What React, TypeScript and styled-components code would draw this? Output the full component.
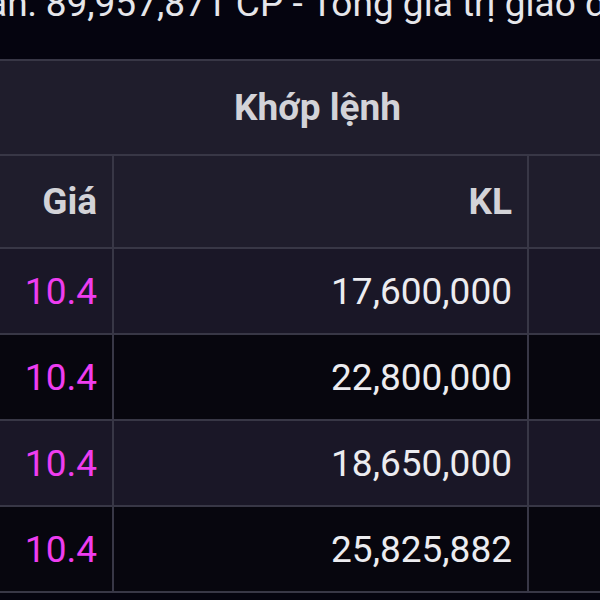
import { createGlobalStyle } from "styled-components";
import styled from "styled-components";

const GlobalStyle = createGlobalStyle`
  html, body {
    margin: 0;
    padding: 0;
    background: #05040f;
  }
  body {
    font-family: Roboto, "Noto Sans", "Liberation Sans", sans-serif;
    overflow: hidden;
  }
`;

const trades = [
  { price: "10.4", volume: "17,600,000" },
  { price: "10.4", volume: "22,800,000" },
  { price: "10.4", volume: "18,650,000" },
  { price: "10.4", volume: "25,825,882" },
];

export default function App() {
  return (
    <>
      <GlobalStyle />
      <Page>
        <SummaryBar>
          <SummaryText>ận: 89,957,871 CP - Tổng giá trị giao dịch</SummaryText>
        </SummaryBar>
        <TableClip>
          <Table>
            <colgroup>
              <col style={{ width: 113 }} />
              <col style={{ width: 415 }} />
              <col style={{ width: 108 }} />
              <col />
            </colgroup>
            <thead>
              <tr>
                <GroupHead colSpan={3}>Khớp lệnh</GroupHead>
                <GroupHead />
              </tr>
              <tr>
                <ColHead>Giá</ColHead>
                <ColHead>KL</ColHead>
                <ColHead />
                <ColHead />
              </tr>
            </thead>
            <tbody>
              {trades.map((t, i) => (
                <Row key={i} $odd={i % 2 === 0}>
                  <PriceCell>{t.price}</PriceCell>
                  <VolumeCell>{t.volume}</VolumeCell>
                  <EmptyCell />
                  <EmptyCell />
                </Row>
              ))}
            </tbody>
          </Table>
        </TableClip>
      </Page>
    </>
  );
}

const Page = styled.div`
  width: 600px;
  height: 600px;
  overflow: hidden;
  background: #05040f;
`;

const SummaryBar = styled.div`
  height: 59px;
  overflow: hidden;
  display: flex;
  align-items: flex-start;
`;

const SummaryText = styled.div`
  margin: -18px 0 0 -13px;
  font-size: 37px;
  color: #e6e6ea;
  white-space: nowrap;
`;

const TableClip = styled.div`
  width: 600px;
  overflow: hidden;
`;

const Table = styled.table`
  width: 760px;
  table-layout: fixed;
  border-collapse: collapse;
  font-size: 37px;

  td,
  th {
    border: 2px solid #383746;
    padding: 0 15px;
    white-space: nowrap;
  }
  tr > :first-child {
    border-left: none;
  }
`;

const GroupHead = styled.th`
  height: 93px;
  background: #1f1d2c;
  color: #d3d3d8;
  font-weight: 700;
  text-align: center;
`;

const ColHead = styled.th`
  height: 91px;
  background: #1f1d2c;
  color: #d3d3d8;
  font-weight: 700;
  text-align: right;
`;

const Row = styled.tr<{ $odd: boolean }>`
  height: 86px;
  background: ${(p) => (p.$odd ? "#1a1727" : "#07060e")};
`;

const PriceCell = styled.td`
  color: #ee3df0;
  text-align: right;
`;

const VolumeCell = styled.td`
  color: #ececf0;
  text-align: right;
`;

const EmptyCell = styled.td``;
